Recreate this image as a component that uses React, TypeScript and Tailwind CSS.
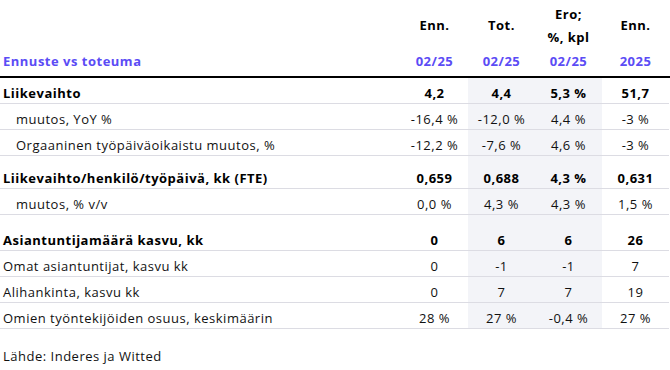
import React from "react";

type Row = {
  label: string;
  vals: string[];
  bold?: boolean;
  indent?: boolean;
  h: string;
};

const rows: Row[] = [
  { label: "Liikevaihto", vals: ["4,2", "4,4", "5,3 %", "51,7"], bold: true, h: "h-[26px]" },
  { label: "muutos, YoY %", vals: ["-16,4 %", "-12,0 %", "4,4 %", "-3 %"], indent: true, h: "h-[26px]" },
  { label: "Orgaaninen työpäiväoikaistu muutos, %", vals: ["-12,2 %", "-7,6 %", "4,6 %", "-3 %"], indent: true, h: "h-[26px]" },
  { label: "Liikevaihto/henkilö/työpäivä, kk (FTE)", vals: ["0,659", "0,688", "4,3 %", "0,631"], bold: true, h: "h-[33px]" },
  { label: "muutos, % v/v", vals: ["0,0 %", "4,3 %", "4,3 %", "1,5 %"], indent: true, h: "h-[26px]" },
  { label: "Asiantuntijamäärä kasvu, kk", vals: ["0", "6", "6", "26"], bold: true, h: "h-[36px]" },
  { label: "Omat asiantuntijat, kasvu kk", vals: ["0", "-1", "-1", "7"], h: "h-[26px]" },
  { label: "Alihankinta, kasvu kk", vals: ["0", "7", "7", "19"], h: "h-[26px]" },
  { label: "Omien työntekijöiden osuus, keskimäärin", vals: ["28 %", "27 %", "-0,4 %", "27 %"], h: "h-[26px]" },
];

export default function App() {
  return (
    <div className="w-[670px] h-[370px] bg-white text-[13px] tracking-[0.5px] text-[#111] font-['Open_Sans',sans-serif]">
      {/* header */}
      <div className="flex h-[78px] border-b-2 border-black">
        <div className="w-[401px] flex items-end pb-[5px] pl-[3px]">
          <span className="leading-[20px] font-bold text-[#5b4cf5]">Ennuste vs toteuma</span>
        </div>
        {[
          ["Enn.", "02/25"],
          ["Tot.", "02/25"],
          ["Ero;|%, kpl", "02/25"],
          ["Enn.", "2025"],
        ].map(([top, bottom], i) => (
          <div key={i} className="w-[67px] flex flex-col items-center pb-[5px]">
            <div className="h-[51px] flex flex-col items-center justify-center font-bold text-black leading-[23px]">
              {top.split("|").map((t) => (
                <span key={t}>{t}</span>
              ))}
            </div>
            <div className="leading-[20px] font-bold text-[#5b4cf5]">{bottom}</div>
          </div>
        ))}
      </div>
      {/* body */}
      {rows.map((r, i) => (
        <div key={i} className={`flex ${r.h}`}>
          <div
            className={`w-[401px] flex items-end border-b border-[#dcdce3] ${r.indent ? "pl-[16px]" : "pl-[3px]"} ${
              r.bold ? "font-bold text-black" : ""
            }`}
          >
            <span className="leading-[20px]">{r.label}</span>
          </div>
          {r.vals.map((v, j) => (
            <div
              key={j}
              className={`w-[67px] flex items-end justify-center border-b border-[#dcdce3] ${
                j === 1 || j === 2 ? "bg-[#f3f4f8]" : ""
              } ${r.bold ? "font-bold text-black" : ""}`}
            >
              <span className="leading-[20px]">{v}</span>
            </div>
          ))}
        </div>
      ))}
      <div className="mt-[17px] pl-[3px] leading-[20px]">Lähde: Inderes ja Witted</div>
    </div>
  );
}
